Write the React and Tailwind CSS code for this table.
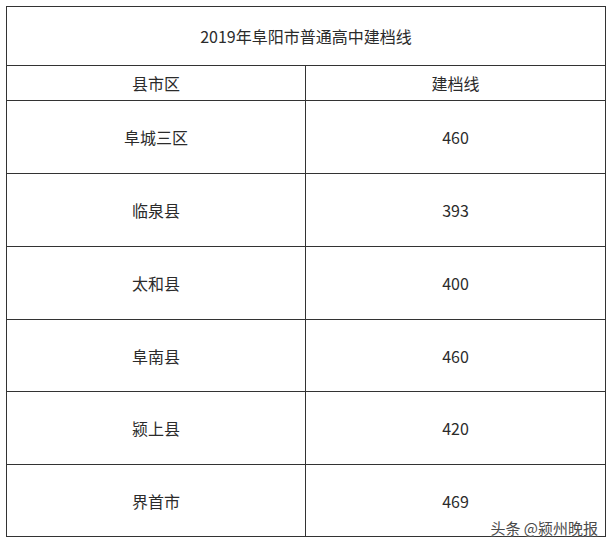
import React from 'react';

const rows = [
    { area: '阜城三区', score: '460', h: 'h-[73px]' },
    { area: '临泉县', score: '393', h: 'h-[73px]' },
    { area: '太和县', score: '400', h: 'h-[73px]' },
    { area: '阜南县', score: '460', h: 'h-[72px]' },
    { area: '颍上县', score: '420', h: 'h-[73px]' },
    { area: '界首市', score: '469', h: 'h-[71px]' },
];

const App = () => {
    return (
        <div className="w-[611px] h-[546px] bg-white pt-[6px] pl-[6px] font-['Noto_Sans_CJK_SC',sans-serif] text-[16px] text-[#2b2b2b]">
            <div className="relative w-[600px] border border-[#333]">
                <div className="h-[59px] border-b border-[#333] flex items-center justify-center">
                    2019年阜阳市普通高中建档线
                </div>
                <div className="h-[35px] border-b border-[#333] flex">
                    <div className="w-[299px] border-r border-[#333] flex items-center justify-center">县市区</div>
                    <div className="flex-1 flex items-center justify-center">建档线</div>
                </div>
                {rows.map((r, i) => (
                    <div
                        key={r.area}
                        className={`${r.h} flex ${i < rows.length - 1 ? 'border-b border-[#333]' : ''}`}
                    >
                        <div className="w-[299px] border-r border-[#333] flex items-center justify-center">{r.area}</div>
                        <div className="flex-1 flex items-center justify-center">{r.score}</div>
                    </div>
                ))}
                <div className="absolute right-[7px] bottom-[1px] text-[15px] leading-[15px] text-[#4a4a4a] [text-shadow:0_0_2px_#fff]">
                    头条 @颍州晚报
                </div>
            </div>
        </div>
    );
};

export default App;
